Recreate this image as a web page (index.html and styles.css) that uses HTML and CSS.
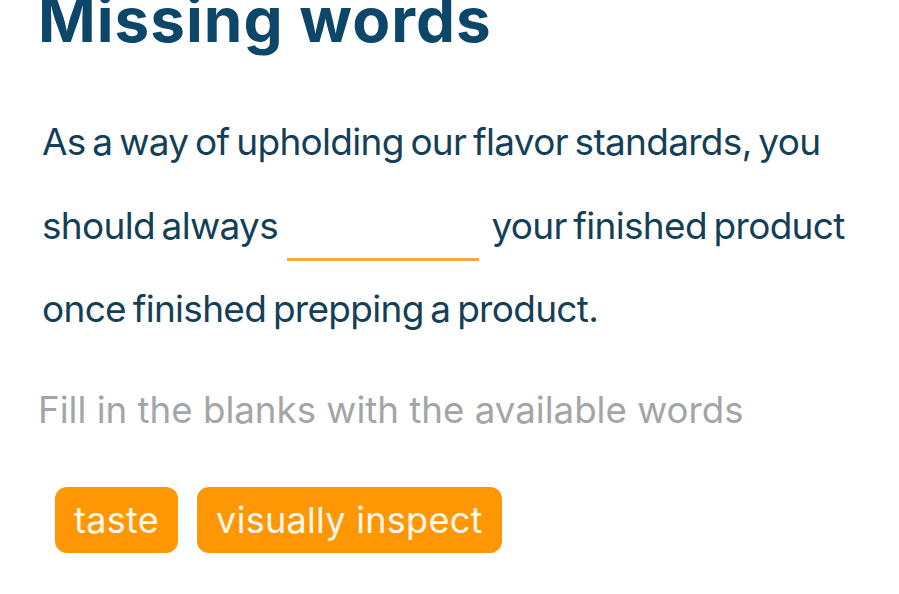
FILE: index.html
```html
<!DOCTYPE html>
<html lang="en">
<head>
<meta charset="utf-8">
<title>Missing words</title>
<link rel="stylesheet" href="styles.css">
</head>
<body>
<main class="exercise">
  <h1 class="title">Missing words</h1>
  <p class="sentence">As a way of upholding our flavor standards, you should always <span class="blank"></span> your finished product once finished prepping a product.</p>
  <p class="hint">Fill in the blanks with the available words</p>
  <div class="choices">
    <button class="chip" type="button">taste</button>
    <button class="chip" type="button">visually inspect</button>
  </div>
</main>
</body>
</html>
```
FILE: styles.css
```css
html, body {
  margin: 0;
  padding: 0;
  background: #ffffff;
}

.exercise {
  padding: 0 0 0 38px;
}

.title {
  margin: -8px 0 0 0;
  font-family: Inter, "Noto Sans", sans-serif;
  font-weight: 700;
  font-size: 62px;
  line-height: 55px;
  color: #0c4669;
  letter-spacing: 1px;
}

.sentence {
  margin: 53px 0 0 4px;
  width: 830px;
  font-family: Inter, "Noto Sans", sans-serif;
  font-size: 37px;
  line-height: 83.5px;
  color: #143f57;
  letter-spacing: -0.7px;
  word-spacing: -3px;
}

.blank {
  display: inline-block;
  width: 192px;
  height: 0;
  margin: 0 6px 0 2px;
  border-bottom: 3px solid #f4a93c;
  vertical-align: -22px;
}

.hint {
  margin: 39px 0 0 0;
  font-family: Inter, "Noto Sans", sans-serif;
  font-size: 36.7px;
  line-height: 40px;
  color: #a3a5a7;
}

.choices {
  display: flex;
  gap: 19px;
  margin: 57px 0 0 17px;
}

.chip {
  height: 66px;
  padding: 0 19px;
  border: none;
  border-radius: 12px;
  background: #ff9705;
  color: #fff9ec;
  font-family: Inter, "Noto Sans", sans-serif;
  font-size: 36px;
  letter-spacing: 0.3px;
}
```
